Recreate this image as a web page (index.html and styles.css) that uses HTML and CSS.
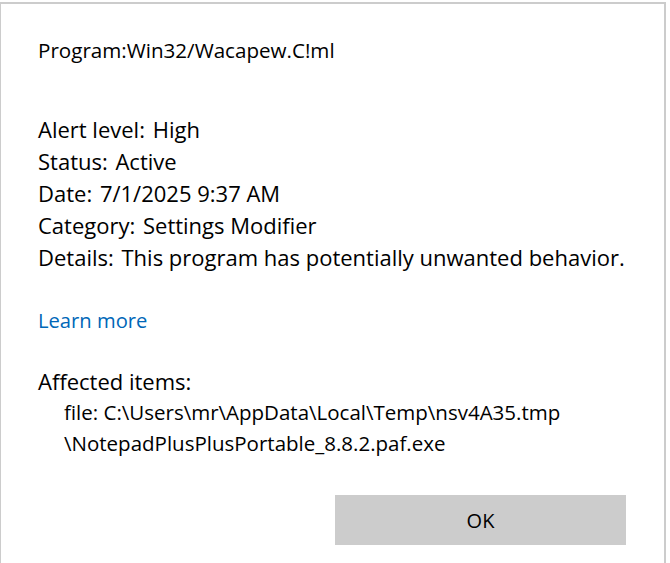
FILE: index.html
```html
<!DOCTYPE html>
<html lang="en">
<head>
    <meta charset="UTF-8">
    <title>Threat details</title>
    <link rel="stylesheet" href="styles.css">
</head>
<body>
    <div class="dialog">
        <h1 class="threat">Program:Win32/Wacapew.C!ml</h1>

        <div class="info">
            <p><span class="label">Alert level:</span> High</p>
            <p><span class="label">Status:</span> Active</p>
            <p><span class="label">Date:</span> 7/1/2025 9:37 AM</p>
            <p><span class="label">Category:</span> Settings Modifier</p>
            <p class="details"><span class="label">Details:</span> This program has potentially unwanted behavior.</p>
        </div>

        <a href="#" class="learn">Learn more</a>

        <div class="affected">
            <p class="heading">Affected items:</p>
            <p class="item">file: C:\Users\mr\AppData\Local\Temp\nsv4A35.tmp</p>
            <p class="item">\NotepadPlusPlusPortable_8.8.2.paf.exe</p>
        </div>

        <div class="actions">
            <button class="button">OK</button>
        </div>
    </div>
</body>
</html>
```

FILE: styles.css
```css
* {
    margin: 0;
    padding: 0;
    box-sizing: border-box;
    font-family: 'Open Sans', 'Noto Sans', sans-serif;
}
body {
    background: #ffffff;
    color: #000000;
}
.dialog {
    width: 666px;
    height: 563px;
    margin-top: 2px;
    border-top: 2px solid #cccccc;
    border-left: 1px solid #cccccc;
    border-right: 2px solid #cccccc;
    padding: 0 0 0 37px;
    display: flex;
    flex-direction: column;
}
.threat {
    font-size: 20.6px;
    font-weight: 400;
    line-height: 28px;
    margin-top: 32px;
}
.info {
    margin-top: 49px;
    font-size: 22px;
    line-height: 32px;
}
.label {
    margin-right: 2px;
}
.learn {
    margin-top: 31px;
    font-size: 20.2px;
    line-height: 32px;
    color: #0067b8;
    text-decoration: none;
    align-self: flex-start;
}
.affected {
    margin-top: 30px;
    font-size: 20.5px;
    line-height: 31px;
}
.heading {
    font-size: 22px;
}
.item {
    padding-left: 26px;
}
.actions {
    margin-top: 36px;
    padding-right: 38px;
    display: flex;
    justify-content: flex-end;
}
.button {
    width: 291px;
    height: 50px;
    background: #cccccc;
    border: none;
    font-size: 20px;
    color: #000000;
}
```
